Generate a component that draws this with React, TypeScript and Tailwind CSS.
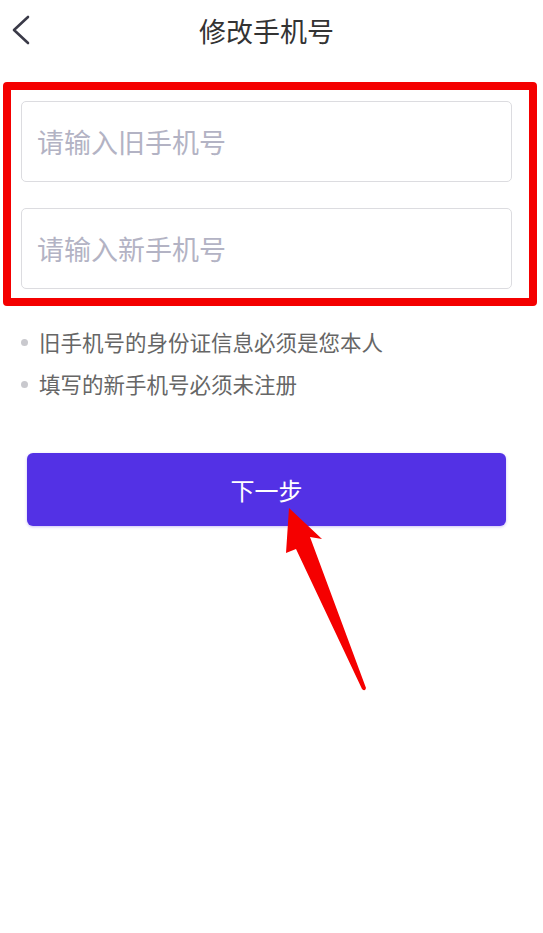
import React from 'react';

const font = { fontFamily: '"Noto Sans CJK SC", "Noto Sans", sans-serif' };

export default function App() {
  return (
    <div className="relative min-h-[933px] w-[543px] bg-white" style={font}>
      {/* header */}
      <div className="flex h-[60px] items-center">
        <div className="flex w-[60px] items-center pl-[11px]">
          <svg width="20" height="32" viewBox="0 0 20 32" fill="none">
            <path d="M17 3 L3 16 L17 29" stroke="#3a3a48" strokeWidth="2.6" strokeLinecap="round" strokeLinejoin="round" />
          </svg>
        </div>
        <h1 className="flex-1 text-center text-[27px] leading-none text-[#333333]">修改手机号</h1>
        <div className="w-[70px]" />
      </div>

      {/* inputs */}
      <div className="relative ml-[21px] mt-[41px] flex w-[491px] flex-col gap-[26px]">
        <input
          type="text"
          placeholder="请输入旧手机号"
          className="h-[81px] w-full rounded-[5px] border border-[#dcdce0] px-[15px] text-[27px] text-[#333] outline-none placeholder:text-[#b3b3c4]"
        />
        <input
          type="text"
          placeholder="请输入新手机号"
          className="h-[81px] w-full rounded-[5px] border border-[#dcdce0] px-[15px] text-[27px] text-[#333] outline-none placeholder:text-[#b3b3c4]"
        />
        {/* annotation box */}
        <div className="pointer-events-none absolute -bottom-[17px] -left-[18px] -right-[25px] -top-[19px] rounded-[4px] border-[8px] border-[#f40000]" />
      </div>

      {/* tips */}
      <ul className="ml-[21px] mt-[32px] text-[21.5px] leading-[42px] text-[#666666]">
        <li className="flex items-center gap-[11px]">
          <span className="h-[7px] w-[7px] rounded-full bg-[#c9c9ce]" />
          旧手机号的身份证信息必须是您本人
        </li>
        <li className="flex items-center gap-[11px]">
          <span className="h-[7px] w-[7px] rounded-full bg-[#c9c9ce]" />
          填写的新手机号必须未注册
        </li>
      </ul>

      {/* button */}
      <button className="ml-[27px] mt-[48px] flex h-[73px] w-[479px] items-center justify-center rounded-[6px] bg-[#5331e5] text-[24px] text-white shadow-[0_1px_3px_rgba(83,49,229,0.3)]">
        下一步
      </button>

      {/* annotation arrow */}
      <svg className="pointer-events-none absolute left-0 top-0" width="543" height="933" viewBox="0 0 543 933">
        <path
          d="M289 508 L322 539 L310 537 L366 688 Q365 692 362 689 L296 549 L286 553 Z"
          fill="#f50000"
        />
      </svg>
    </div>
  );
}
